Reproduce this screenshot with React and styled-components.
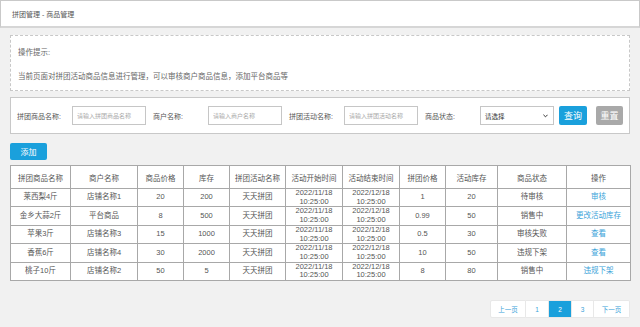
import React from 'react'
import styled, { createGlobalStyle } from 'styled-components'

const GlobalStyle = createGlobalStyle`
    html, body {
        margin: 0;
        padding: 0;
        background: #f1f1f1;
        font-family: "Liberation Sans", Arial, "Noto Sans CJK SC", sans-serif;
        color: #555;
    }
    * { box-sizing: border-box; }
`

const Page = styled.div`
    width: 640px;
    height: 327px;
    overflow: hidden;
    background: #f1f1f1;
`

const Header = styled.div`
    height: 28px;
    background: #fff;
    border: 1px solid #c9c9c9;
    border-bottom: 2px solid #d6d6d6;
    display: flex;
    align-items: center;
    padding-left: 11px;
    font-size: 7px;
    color: #555;
`

const Body = styled.div`
    padding: 7px 10px 0 10px;
    display: flex;
    flex-direction: column;
`

const Tips = styled.div`
    height: 56px;
    background: #fff;
    border: 1px dashed #c8c8c8;
    padding: 12px 0 0 7px;
    font-size: 7.5px;
    line-height: 10px;
    color: #666;
    p {
        margin: 0 0 14px 0;
    }
`

const SearchBar = styled.div`
    margin-top: 6px;
    height: 37px;
    background: #fff;
    border: 1px solid #c8c8c8;
    display: flex;
    align-items: center;
    padding-left: 6px;
`

const Field = styled.div`
    display: flex;
    align-items: center;
    margin-right: 7px;
`

const Label = styled.span`
    width: 55px;
    font-size: 7px;
    color: #555;
    white-space: nowrap;
`

const Input = styled.input`
    width: 74px;
    height: 19px;
    border: 1px solid #c6c6c6;
    padding: 0 4px;
    font-size: 6px;
    font-family: inherit;
    outline: none;
    &::placeholder {
        color: #aaa;
    }
`

const Select = styled.div`
    width: 74px;
    height: 19px;
    border: 1px solid #c6c6c6;
    display: flex;
    align-items: center;
    justify-content: space-between;
    padding: 0 5px 0 4px;
    font-size: 6.5px;
    color: #333;
`

const Button = styled.button`
    height: ${p => p.h || 19}px;
    width: ${p => p.w}px;
    margin-left: ${p => p.ml || 0}px;
    border: none;
    border-radius: 2px;
    background: ${p => p.grey ? '#a9a9a9' : '#1aa0dc'};
    color: #fff;
    font-size: ${p => p.fs || 8.5}px;
    font-family: inherit;
    padding: 0;
    cursor: pointer;
`

const Toolbar = styled.div`
    margin-top: 7px;
    height: 17px;
`

const Table = styled.table`
    margin-top: 7px;
    width: 620px;
    border-collapse: collapse;
    table-layout: fixed;
    background: #fff;
    font-size: 7.5px;
    color: #555;
    th, td {
        border: 1px solid #a8a8a8;
        text-align: center;
        padding: 0;
        font-weight: normal;
    }
    th {
        height: 23px;
    }
    td {
        height: 18.4px;
        line-height: 8.7px;
    }
`

const Link = styled.a`
    color: #3aa3d9;
    text-decoration: none;
`

const Pager = styled.div`
    margin-top: 19px;
    display: flex;
    justify-content: flex-end;
`

const PageItem = styled.div`
    width: ${p => p.w}px;
    height: 18px;
    display: flex;
    align-items: center;
    justify-content: center;
    background: ${p => p.active ? '#1aa0dc' : '#fff'};
    color: ${p => p.active ? '#fff' : '#3aa3d9'};
    border: 1px solid #e8e8e8;
    border-left: none;
    font-size: 6.5px;
    &:first-child {
        border-left: 1px solid #e8e8e8;
        border-radius: 2px 0 0 2px;
    }
    &:last-child {
        border-radius: 0 2px 2px 0;
    }
`

const cols = [60, 67, 46, 46, 56, 57, 57, 46, 52, 69, 64]
const heads = ['拼团商品名称', '商户名称', '商品价格', '库存', '拼团活动名称', '活动开始时间', '活动结束时间', '拼团价格', '活动库存', '商品状态', '操作']

const rows = [
    ['莱西梨4斤', '店铺名称1', '20', '200', '天天拼团', '1', '20', '待审核', '审核'],
    ['金乡大蒜2斤', '平台商品', '8', '500', '天天拼团', '0.99', '50', '销售中', '更改活动库存'],
    ['苹果3斤', '店铺名称3', '15', '1000', '天天拼团', '0.5', '30', '审核失败', '查看'],
    ['香蕉6斤', '店铺名称4', '30', '2000', '天天拼团', '10', '50', '违规下架', '查看'],
    ['桃子10斤', '店铺名称2', '50', '5', '天天拼团', '8', '80', '销售中', '违规下架'],
]

function DateCell({ date }) {
    return <td>{date}<br />10:25:00</td>
}

export default function App() {
    return (
        <Page>
            <GlobalStyle />
            <Header>拼团管理 - 商品管理</Header>
            <Body>
                <Tips>
                    <p>操作提示:</p>
                    <p>当前页面对拼团活动商品信息进行管理，可以审核商户商品信息，添加平台商品等</p>
                </Tips>
                <SearchBar>
                    <Field>
                        <Label>拼团商品名称:</Label>
                        <Input placeholder="请输入拼团商品名称" />
                    </Field>
                    <Field>
                        <Label>商户名称:</Label>
                        <Input placeholder="请输入商户名称" />
                    </Field>
                    <Field>
                        <Label>拼团活动名称:</Label>
                        <Input placeholder="请输入拼团活动名称" />
                    </Field>
                    <Field>
                        <Label>商品状态:</Label>
                        <Select>
                            <span>请选择</span>
                            <svg width="5" height="4" viewBox="0 0 6 4">
                                <path d="M0.5 0.5 L3 3 L5.5 0.5" stroke="#333" strokeWidth="1.2" fill="none" />
                            </svg>
                        </Select>
                        <Button w={28} ml={5} fs={9}>查询</Button>
                        <Button w={27} ml={9} fs={9} grey>重置</Button>
                    </Field>
                </SearchBar>
                <Toolbar>
                    <Button w={37} h={17} fs={8}>添加</Button>
                </Toolbar>
                <Table>
                    <colgroup>
                        {cols.map((w, i) => <col key={i} style={{ width: w }} />)}
                    </colgroup>
                    <thead>
                        <tr>{heads.map(h => <th key={h}>{h}</th>)}</tr>
                    </thead>
                    <tbody>
                        {rows.map((r, i) => (
                            <tr key={i}>
                                <td>{r[0]}</td>
                                <td>{r[1]}</td>
                                <td>{r[2]}</td>
                                <td>{r[3]}</td>
                                <td>{r[4]}</td>
                                <DateCell date="2022/11/18" />
                                <DateCell date="2022/12/18" />
                                <td>{r[5]}</td>
                                <td>{r[6]}</td>
                                <td>{r[7]}</td>
                                <td><Link href="#">{r[8]}</Link></td>
                            </tr>
                        ))}
                    </tbody>
                </Table>
                <Pager>
                    <PageItem w={36}>上一页</PageItem>
                    <PageItem w={23}>1</PageItem>
                    <PageItem w={23} active>2</PageItem>
                    <PageItem w={22}>3</PageItem>
                    <PageItem w={36}>下一页</PageItem>
                </Pager>
            </Body>
        </Page>
    )
}
